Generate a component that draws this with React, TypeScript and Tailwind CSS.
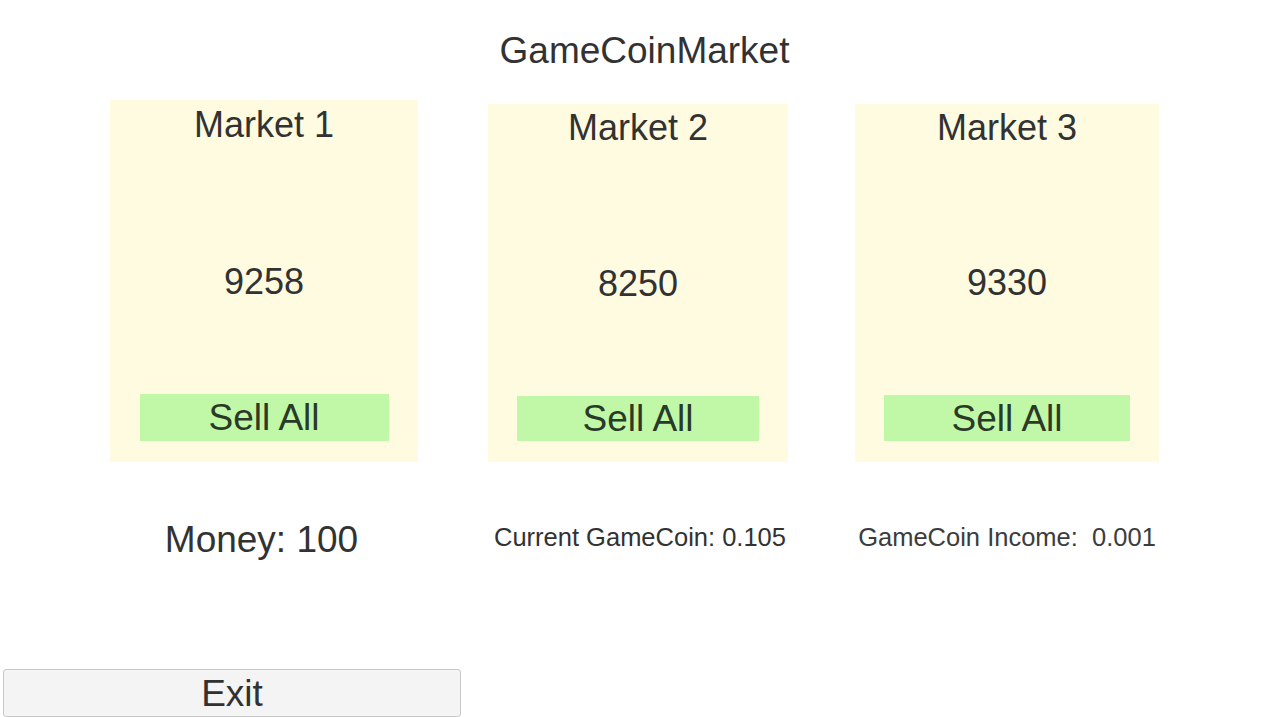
type Market = {
  name: string;
  price: number;
  panel: string;
  label: string;
  button: string;
};

const markets: Market[] = [
  { name: 'Market 1', price: 9258, panel: 'w-[308px] h-[362px]', label: 'pt-[7px]', button: 'w-[249px] h-[47px]' },
  { name: 'Market 2', price: 8250, panel: 'w-[300px] h-[358px] ml-[70px]', label: 'pt-[6px]', button: 'w-[242px] h-[45px]' },
  { name: 'Market 3', price: 9330, panel: 'w-[304px] h-[358px] ml-[67px]', label: 'pt-[6px]', button: 'w-[246px] h-[46px]' },
];

function MarketPanel({ m }: { m: Market }) {
  return (
    <div className={`flex flex-col items-center bg-[#fefbe1] pb-[21px] ${m.panel}`}>
      <div className={`text-[36px] leading-none ${m.label}`}>{m.name}</div>
      <div className="mt-auto mb-[94px] text-[36px] leading-none">{m.price}</div>
      <button className={`flex items-center justify-center bg-[#c1f8a7] text-[37px] leading-none text-[#2a3a28] ${m.button}`}>
        Sell All
      </button>
    </div>
  );
}

export default function App() {
  return (
    <div
      className="w-[1280px] h-[717px] overflow-hidden bg-white text-[#323232] flex flex-col"
      style={{ fontFamily: '"Liberation Sans", Arial, sans-serif' }}
    >
      <header className="flex justify-center pt-[32px] pl-[9px]">
        <h1 className="text-[37px] leading-none">GameCoinMarket</h1>
      </header>

      <div className="flex items-end mt-[31px] pl-[110px]">
        {markets.map((m) => (
          <MarketPanel key={m.name} m={m} />
        ))}
      </div>

      <div className="flex items-start mt-[59px] pl-[110px] h-[37px]">
        <div className="w-[308px] text-center text-[37px] leading-none pr-[5px]">Money: 100</div>
        <div className="w-[300px] ml-[70px] text-center text-[25.5px] leading-none pt-[4px] pl-[4px]">
          Current GameCoin: 0.105
        </div>
        <div className="w-[304px] ml-[67px] text-center text-[25.5px] leading-none pt-[4px] whitespace-pre text-[#3c3c3c]">
          {'GameCoin Income:  0.001'}
        </div>
      </div>

      <div className="mt-[111px] pl-[3px]">
        <button className="flex items-center justify-center w-[458px] h-[48px] border border-[#c8c8c8] rounded-[3px] bg-[#f4f4f4] text-[37px] leading-none">
          Exit
        </button>
      </div>
    </div>
  );
}
